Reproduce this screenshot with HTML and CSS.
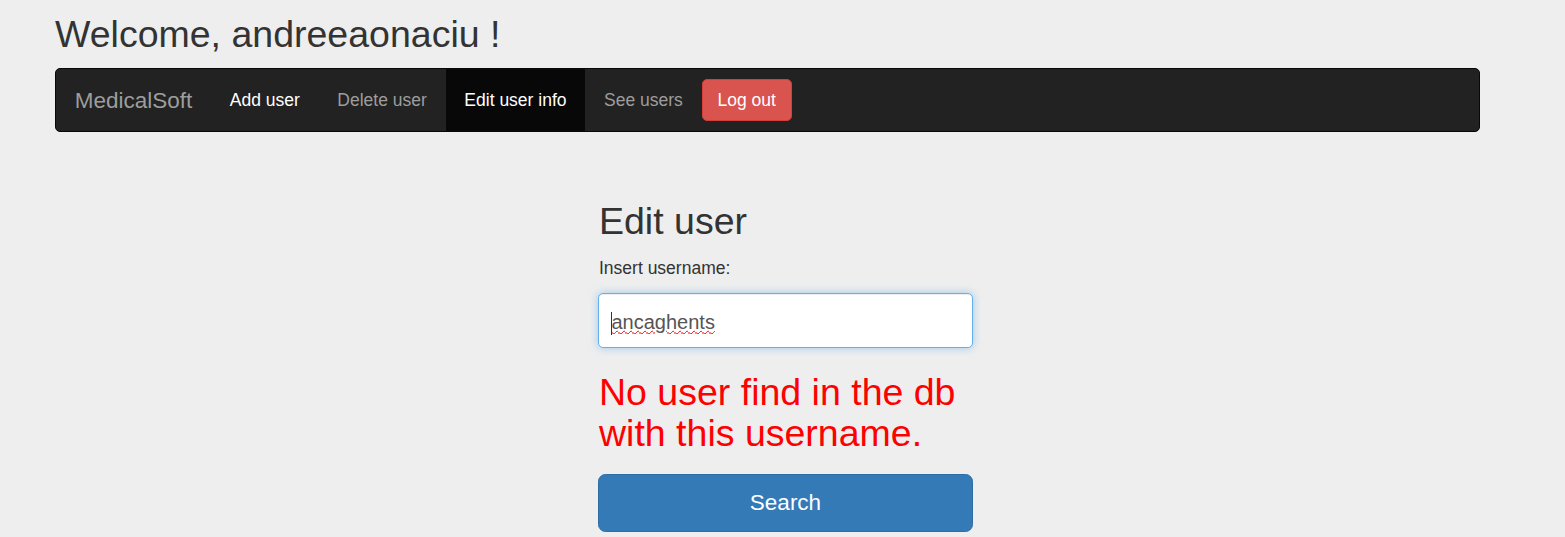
FILE: index.html
```html
<!DOCTYPE html>
<html>
<head>
<meta charset="utf-8">
<title>MedicalSoft</title>
<link rel="stylesheet" href="styles.css">
</head>
<body>
<div class="header">
  <h2 class="welcome">Welcome, andreeaonaciu !</h2>
  <nav class="navbar">
    <a class="brand" href="#">MedicalSoft</a>
    <ul class="nav">
      <li><a class="nav-link light" href="#">Add user</a></li>
      <li><a class="nav-link" href="#">Delete user</a></li>
      <li><a class="nav-link active" href="#">Edit user info</a></li>
      <li><a class="nav-link" href="#">See users</a></li>
      <li class="nav-btn-item"><button class="btn-danger" type="button">Log out</button></li>
    </ul>
  </nav>
</div>
<form class="form-col">
  <h2 class="title">Edit user</h2>
  <label class="label" for="username">Insert username:</label>
  <div class="input-wrap">
    <input id="username" class="form-control" type="text" value="ancaghents">
    <span class="caret"></span>
  </div>
  <h2 class="error">No user find in the db with this username.</h2>
  <button class="btn-primary" type="button">Search</button>
</form>
</body>
</html>
```
FILE: styles.css
```css
* { box-sizing: border-box; }
html, body { margin: 0; padding: 0; }
body {
  background: #eeeeee;
  font-family: "Liberation Sans", Arial, Helvetica, sans-serif;
  color: #333333;
  font-size: 17.5px;
  line-height: 1.42857;
}
.header {
  width: 1425px;
  margin-left: 55px;
}
.welcome {
  margin: 14px 0 12.5px 0;
  font-size: 37.5px;
  font-weight: 400;
  line-height: 1.1;
  color: #333;
}
.navbar {
  display: flex;
  align-items: stretch;
  height: 64px;
  background: #222222;
  border: 1px solid #080808;
  border-radius: 5px;
}
.brand {
  padding: 18.75px 18.75px;
  font-size: 22.5px;
  line-height: 25px;
  color: #9d9d9d;
  text-decoration: none;
}
.nav {
  display: flex;
  list-style: none;
  margin: 0;
  padding: 0;
}
.nav li { display: flex; }
.nav-link {
  display: block;
  padding: 18.75px 18.75px;
  line-height: 25px;
  font-size: 17.5px;
  color: #9d9d9d;
  text-decoration: none;
}
.nav-link.light { color: #ffffff; }
.nav-link.active { color: #ffffff; background: #080808; }
.nav-btn-item { align-items: flex-start; }
.btn-danger {
  margin-top: 10px;
  height: 42px;
  padding: 2px 15px 0 15px;
  font-family: inherit;
  font-size: 17.5px;
  color: #fff;
  background: #d9534f;
  border: 1px solid #d43f3a;
  border-radius: 5px;
}
.form-col {
  width: 375px;
  margin-left: 598px;
  margin-top: 69px;
}
.title {
  margin: 0 0 14px 0;
  font-size: 37.5px;
  font-weight: 400;
  line-height: 1.1;
  color: #333;
  padding-left: 1px;
}
.label {
  display: block;
  font-size: 17.5px;
  line-height: 25px;
  margin-bottom: 11.5px;
  padding-left: 1px;
  color: #333;
}
.input-wrap { position: relative; }
.form-control {
  display: block;
  width: 375px;
  height: 55px;
  padding: 4px 12.5px 0 12.5px;
  font-family: inherit;
  font-size: 20px;
  color: #555;
  background: #fff;
  border: 1px solid #66afe9;
  border-radius: 5px;
  outline: 0;
  box-shadow: inset 0 1px 1px rgba(0,0,0,.075), 0 0 8px rgba(102,175,233,.6);
  text-decoration: underline wavy #ff0000;
  text-decoration-thickness: 1px;
  text-underline-offset: 1px;
}
.caret {
  position: absolute;
  left: 13px;
  top: 19px;
  width: 1px;
  height: 23px;
  background: #333;
}
.error {
  margin: 24px 0 20px 0;
  font-size: 37.5px;
  font-weight: 400;
  line-height: 1.1;
  color: #ff0000;
  padding-left: 1px;
}
.btn-primary {
  display: block;
  width: 375px;
  height: 57.5px;
  padding-top: 2px;
  font-family: inherit;
  font-size: 22.5px;
  color: #fff;
  background: #337ab7;
  border: 1px solid #2e6da4;
  border-radius: 7.5px;
}
```
